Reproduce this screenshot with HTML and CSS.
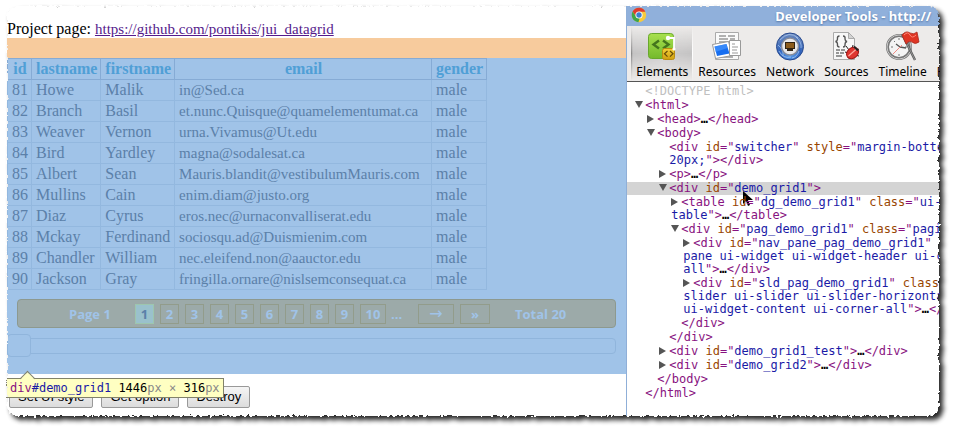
FILE: index.html
```html
<!DOCTYPE html>
<html lang="en">
<head>
<meta charset="utf-8">
<title>jui_datagrid</title>
<link rel="stylesheet" href="styles.css">
</head>
<body>
<div class="sheet">
  <main class="page">
    <p class="project">Project page: <a href="https://github.com/pontikis/jui_datagrid">https://github.com/pontikis/jui_datagrid</a></p>
    <div class="margin-band"></div>
    <section class="grid">
      <table class="data">
        <thead><tr><th>id</th><th>lastname</th><th>firstname</th><th class="email">email</th><th>gender</th></tr></thead>
        <tbody>
          <tr><td>81</td><td>Howe</td><td>Malik</td><td>in@Sed.ca</td><td>male</td></tr>
          <tr><td>82</td><td>Branch</td><td>Basil</td><td>et.nunc.Quisque@quamelementumat.ca</td><td>male</td></tr>
          <tr><td>83</td><td>Weaver</td><td>Vernon</td><td>urna.Vivamus@Ut.edu</td><td>male</td></tr>
          <tr><td>84</td><td>Bird</td><td>Yardley</td><td>magna@sodalesat.ca</td><td>male</td></tr>
          <tr><td>85</td><td>Albert</td><td>Sean</td><td>Mauris.blandit@vestibulumMauris.com</td><td>male</td></tr>
          <tr><td>86</td><td>Mullins</td><td>Cain</td><td>enim.diam@justo.org</td><td>male</td></tr>
          <tr><td>87</td><td>Diaz</td><td>Cyrus</td><td>eros.nec@urnaconvalliserat.edu</td><td>male</td></tr>
          <tr><td>88</td><td>Mckay</td><td>Ferdinand</td><td>sociosqu.ad@Duismienim.com</td><td>male</td></tr>
          <tr><td>89</td><td>Chandler</td><td>William</td><td>nec.eleifend.non@aauctor.edu</td><td>male</td></tr>
          <tr><td>90</td><td>Jackson</td><td>Gray</td><td>fringilla.ornare@nislsemconsequat.ca</td><td>male</td></tr>
        </tbody>
      </table>
      <nav class="pager" aria-label="Pages">
        <span class="current-page">Page 1</span>
        <div class="pages">
          <button class="num active">1</button><button class="num">2</button><button class="num">3</button><button class="num">4</button><button class="num">5</button><button class="num">6</button><button class="num">7</button><button class="num">8</button><button class="num">9</button><button class="num wide">10</button>
        </div>
        <span class="more">...</span>
        <div class="jumps"><button class="next">→</button><button class="last">»</button></div>
        <span class="total">Total 20</span>
      </nav>
      <input class="slider" type="range" min="1" max="20" value="1" aria-label="Page">
      <div class="tip"><span class="tip-tag">div</span><span class="tip-id">#demo_grid1</span> 1446<span class="unit">px</span> <span class="unit">×</span> 316<span class="unit">px</span></div>
    </section>
    <div class="actions">
      <button>Set UI style</button>
      <button>Get option</button>
      <button>Destroy</button>
    </div>
  </main>

  <aside class="devtools">
    <header class="titlebar">
      <svg class="chrome" viewBox="0 0 16 16" aria-hidden="true">
        <circle cx="8" cy="8" r="7.2" fill="#f8ca3a"/>
        <path d="M1.6 4.6A7.2 7.2 0 0 1 14.4 4.8H8L5 9.5Z" fill="#dc3b2f"/>
        <path d="M1.6 4.6 5 9.6l3.6 1.8L7.4 15.2A7.2 7.2 0 0 1 1.6 4.6Z" fill="#3fa648"/>
        <circle cx="8" cy="8" r="3.6" fill="#fff"/><circle cx="8" cy="8" r="2.7" fill="#3c7fd0"/>
      </svg>
      <h1>Developer Tools - http://</h1>
    </header>
    <div class="toolbar">
      <button class="tool selected">
        <svg viewBox="0 0 32 32" aria-hidden="true">
          <defs><linearGradient id="green" x2="0" y2="1"><stop stop-color="#a8e04e"/><stop offset="1" stop-color="#74b92c"/></linearGradient>
          <linearGradient id="gold" x2="0" y2="1"><stop stop-color="#f4cf38"/><stop offset="1" stop-color="#cf9f10"/></linearGradient></defs>
          <rect x="2.5" y="2.5" width="25" height="25" rx="3" fill="url(#green)" stroke="#69a82c"/>
          <path d="M13 9.5 7.5 13.5 13 17.5M17 9.5 22.5 13.5 17 17.5" fill="none" stroke="#44751d" stroke-width="2.4"/>
          <path d="M22 7h6v11" fill="none" stroke="#fff" stroke-width="1.8"/>
          <circle cx="22" cy="7" r="2.2" fill="#fff"/>
          <rect x="16.500" y="17.500" width="12" height="11" rx="2" fill="url(#gold)" stroke="#b98d12"/>
          <path d="m21.500 20-3 2.800 3 2.800M24 20l3 2.800-3 2.800" fill="none" stroke="#654c08" stroke-width="1.200"/>
          <circle cx="28" cy="18" r="1.600" fill="#fff"/>
        </svg>Elements
      </button>
      <button class="tool">
        <svg viewBox="0 0 32 32" aria-hidden="true">
          <path d="M4.500 1.500h23v27h-23z" fill="#fafafa" stroke="#aaa"/>
          <path d="M8 5h7M17 5h7M8 8h9M19 8h5M8 11h14M8 14h12M8 26h14" stroke="#999" stroke-width="1.300"/>
          <path d="m1.500 13.500 16-3 4 14-17 3z" fill="#fff" stroke="#999"/>
          <path d="m3.500 15.500 12-2.500 3 9.500-12.500 2.500z" fill="#176ef0"/>
          <path d="m3.500 15.500 12-2.500 1 4-12 4z" fill="#4b9aff" opacity=".6"/>
          <path d="M18.500 9.500h11v15h-11z" fill="#fff" stroke="#999"/>
          <path d="M21 13h3M21 16h6M21 19h5M21 22h6" stroke="#999" stroke-width="1.200"/>
        </svg>Resources
      </button>
      <button class="tool">
        <svg viewBox="0 0 32 32" aria-hidden="true">
          <defs><radialGradient id="globe" cx=".5" cy=".8" r=".8"><stop stop-color="#5aa0ed"/><stop offset=".5" stop-color="#2f62bc"/><stop offset="1" stop-color="#7690bd"/></radialGradient></defs>
          <circle cx="16" cy="15.500" r="13.500" fill="url(#globe)" stroke="#25488f"/>
          <path d="M6 9Q15-1 24 7M5 20Q9 28 17 26M25 20Q23 26 18 27M4 14Q10 19 9 25M22 6Q28 11 27 17" fill="none" stroke="#b5d3f7" opacity=".65"/>
          <circle cx="16" cy="15.500" r="8.500" fill="#e9e9eb" stroke="#868c9c" stroke-width="1.500"/>
          <path d="M11 11h10v7h-2v2h-6v-2h-2z" fill="#302313"/>
          <path d="M13 12v5M15 12v5M17 12v5M19 12v5" stroke="#e69529"/>
        </svg>Network
      </button>
      <button class="tool">
        <svg viewBox="0 0 32 32" aria-hidden="true">
          <path d="M3.500 1.500h15l6 6v21h-21z" fill="#f7f7f7" stroke="#aaa"/><path d="M18.500 1.500v6h6z" fill="#d3d3d3" stroke="#aaa"/>
          <path d="M9.500 5Q7 5 7.500 8 7.500 10 5.500 10.500 7.500 11 7.500 13 7 16 9.500 16M13 5Q15.500 5 15 8 15 10 17 10.500 15 11 15 13 15.500 16 13 16" fill="none" stroke="#555" stroke-width="1.400"/>
          <path d="M6 19h4M11 19h4M6 22h3M10 22h4M6 25h6" stroke="#777" stroke-width="1.300"/>
          <path d="m16 15 3 4M23 14l-1 4M29 18l-4 2M29 25l-4-1M15 21l3 1M19 28l1-3" stroke="#222"/>
          <ellipse cx="22.500" cy="22" rx="6.500" ry="5.200" transform="rotate(-40 22.500 22)" fill="#df3630" stroke="#a21614"/>
          <path d="m18.500 25 8-7" stroke="#ffaaa0" stroke-width="1.200"/><path d="m24 15.500 4 4" stroke="#222" stroke-width="2"/>
        </svg>Sources
      </button>
      <button class="tool">
        <svg viewBox="0 0 32 32" aria-hidden="true">
          <circle cx="12" cy="16" r="11.500" fill="#f4f4f4" stroke="#777" stroke-width="3"/>
          <circle cx="12" cy="16" r="12" fill="none" stroke="#c9c9c9"/>
          <path d="M12 7v2M4 16h2M20 16h-2M12 25v-2M7 10l1 1M7 22l1-1" stroke="#777"/>
          <path d="m13 16-4-3M13 16l6 1" stroke="#555" stroke-width="1.300"/><path d="m6 23 9-9" stroke="#ee8b84"/>
          <path d="m15 3 13 26" stroke="#555" stroke-width="2.400"/><path d="m15 3 13 26" stroke="#aaa" stroke-width=".8"/>
          <path d="M15 4Q19-1 23 2 27 4 30 1L32 11Q28 14 25 11 22 9 19 13Z" fill="#df3524" stroke="#a82b20" stroke-width=".8"/>
          <path d="M17 4Q21 0 23 4T29 4" fill="none" stroke="#ff8675"/>
        </svg>Timeline
      </button>
      <button class="tool">
        <svg viewBox="0 0 32 32" aria-hidden="true"></svg>Profiles
      </button>
    </div>
    <div class="tree">
      <div class="row leaf d0 doctype">&lt;!DOCTYPE html&gt;</div>
      <div class="row d0"><i class="open"></i>&lt;html&gt;</div>
      <div class="row d1"><i class="shut"></i>&lt;head&gt;<b>…</b>&lt;/head&gt;</div>
      <div class="row d1"><i class="open"></i>&lt;body&gt;</div>
      <div class="row leaf d2">&lt;div <em>id</em>="<q>switcher</q>" <em>style</em>="<q>margin-bottom:<br>20px;</q>"&gt;&lt;/div&gt;</div>
      <div class="row d2"><i class="shut"></i>&lt;p&gt;<b>…</b>&lt;/p&gt;</div>
      <div class="row d2 picked"><i class="open"></i>&lt;div <em>id</em>="<q>demo_grid1</q>"&gt;<svg class="cursor" viewBox="0 0 12 18" aria-hidden="true"><path d="M1 1v13l3-3 2 5 2-1-2-5h5z"/></svg></div>
      <div class="row d3"><i class="shut"></i>&lt;table <em>id</em>="<q>dg_demo_grid1</q>" <em>class</em>="<q>ui-s<br>table</q>"&gt;<b>…</b>&lt;/table&gt;</div>
      <div class="row d3"><i class="open"></i>&lt;div <em>id</em>="<q>pag_demo_grid1</q>" <em>class</em>="<q>pagin</q></div>
      <div class="row d4"><i class="shut"></i>&lt;div <em>id</em>="<q>nav_pane_pag_demo_grid1</q>" <em>c</em><q><br>pane ui-widget ui-widget-header ui-co<br>all</q>"&gt;<b>…</b>&lt;/div&gt;</div>
      <div class="row d4"><i class="shut"></i>&lt;div <em>id</em>="<q>sld_pag_demo_grid1</q>" <em>class</em>=<q><br>slider ui-slider ui-slider-horizontal<br>ui-widget-content ui-corner-all</q>"&gt;<b>…</b>&lt;/d</div>
      <div class="row leaf d3">&lt;/div&gt;</div>
      <div class="row leaf d2">&lt;/div&gt;</div>
      <div class="row d2"><i class="shut"></i>&lt;div <em>id</em>="<q>demo_grid1_test</q>"&gt;<b>…</b>&lt;/div&gt;</div>
      <div class="row d2"><i class="shut"></i>&lt;div <em>id</em>="<q>demo_grid2</q>"&gt;<b>…</b>&lt;/div&gt;</div>
      <div class="row leaf d1">&lt;/body&gt;</div>
      <div class="row leaf d0">&lt;/html&gt;</div>
    </div>
  </aside>
</div>
<svg class="torn" aria-hidden="true">
  <filter id="tear" filterUnits="userSpaceOnUse" x="0" y="0" width="100%" height="100%" color-interpolation-filters="sRGB">
    <feTurbulence type="fractalNoise" baseFrequency=".3" numOctaves="2" seed="4" result="noise"/>
    <feDisplacementMap in="SourceGraphic" in2="noise" scale="5" xChannelSelector="R" yChannelSelector="G"/>
    <feGaussianBlur stdDeviation=".5" result="paper"/>
    <feFlood flood-color="#fff" result="white"/>
    <feOffset in="paper" dx="4" dy="4"/>
    <feGaussianBlur stdDeviation="2.500"/>
    <feComponentTransfer result="shadow"><feFuncA type="linear" slope=".85"/></feComponentTransfer>
    <feComposite in="shadow" in2="white" operator="over" result="ground"/>
    <feComposite in="ground" in2="paper" operator="out"/>
  </filter>
  <g filter="url(#tear)"><rect class="outline" x="7" y="6" rx="9"/></g>
</svg>
</body>
</html>
```
FILE: styles.css
```css
* { box-sizing: border-box; }

body {
  position: relative;
  margin: 0;
  padding: 6px 15px 17px 7px;
  background: #fff;
  color: #000;
  font: 16px/18px "Liberation Serif", serif;
}

button { margin: 0; font: inherit; color: inherit; }

.sheet { display: flex; }
.page { flex: 620 1 0; min-width: 0; padding-top: 13px; }

.project { margin: 0; line-height: 19px; }
.project a { color: #551a8b; font-size: 15px; line-height: 16px; }
.margin-band { height: 20px; background: #f7cb9d; }

/* Highlighted grid */
.grid { position: relative; height: 316px; background: #a0c3e8; }
.data { border-collapse: collapse; color: #5b80a9; }
.data th, .data td { padding: 1px 3px 1px 4px; border: 1px solid #93b8df; text-align: left; }
.data th { border-color: #86abd5; color: #509fd6; text-align: center; }
.data .email { width: 257px; }
.data td:nth-child(4) { font-size: 15px; }

.pager {
  display: flex;
  align-items: center;
  height: 29px;
  margin: 9px 10px;
  padding-left: 51px;
  border: 1px solid #8d998f;
  border-radius: 4px;
  background: #9caaa9;
  color: #a0c3e8;
  font: 700 13px/18px "Open Sans", sans-serif;
  white-space: nowrap;
}
.current-page { width: 66px; }
.pages, .jumps { display: flex; gap: 6px; }
.pager button { height: 20px; padding: 0; border: 1px solid #929c8b; background: none; }
.num { width: 19px; }
.pager .active { border-color: #9dc6ae; background: #9ac1cc; color: #5b80a9; }
.pager .wide { width: 26px; }
.more { width: 32px; padding-left: 5px; }
.pager .next { width: 36px; font: 16px/16px "DejaVu Sans", sans-serif; }
.last { width: 30px; }
.total { margin-left: 25px; }

.slider {
  display: block;
  width: calc(100% - 10px);
  height: 24px;
  margin: -3px 0 0;
  appearance: none;
  background: none;
}
.slider::-webkit-slider-runnable-track { height: 16px; border: 1px solid #90b5dc; border-radius: 4px; }
.slider::-webkit-slider-thumb {
  appearance: none;
  width: 24px;
  height: 23px;
  margin: -5px 0 0 -1px;
  border: 1px solid #90b5dc;
  border-radius: 4px;
  background: #a0c3e8;
}

.tip {
  position: absolute;
  top: calc(100% + 4px);
  left: -1px;
  padding: 0 3px;
  border: 1px solid #82826a;
  background: #ffffc2;
  font: 12px/18px "DejaVu Sans Mono", monospace;
  white-space: nowrap;
}
.tip::before {
  content: "";
  position: absolute;
  top: -6px;
  left: 15px;
  width: 10px;
  height: 10px;
  border: solid #82826a;
  border-width: 1px 0 0 1px;
  background: linear-gradient(135deg, #ffffc2 50%, transparent 50%);
  transform: rotate(45deg);
}
.tip-tag { color: #881280; }
.tip-id { color: #1a1aa6; }
.unit { color: #888; }

.actions { display: flex; gap: 8px; padding: 12px 2px 7px; }
.actions button {
  height: 22px;
  padding: 0 8px;
  border: 1px solid #999;
  border-radius: 2px;
  background: linear-gradient(#f5f5f5, #dcdcdc);
  font: 13px/20px "Liberation Sans", sans-serif;
}

/* Developer tools */
.devtools { flex: 313 1 0; min-width: 0; overflow: hidden; border-left: 1px solid #8fafd8; background: #fff; }
.titlebar { display: flex; height: 20px; background: #90b0db; }
.chrome { width: 16px; height: 16px; margin: 1px 0 0 4px; }
.titlebar h1 {
  margin: 0 0 0 128px;
  color: #fff;
  font: 700 13px/20px "Noto Sans", sans-serif;
  text-shadow: 0 1px 2px #5878a8;
  white-space: nowrap;
}
.toolbar {
  display: flex;
  height: 56px;
  padding-left: 4px;
  overflow: hidden;
  border-bottom: 1px solid #555;
  background: #edebea;
}
.tool {
  display: flex;
  flex: none;
  flex-direction: column;
  align-items: center;
  padding: 5px 5px 0;
  border: 0;
  background: none;
  font: 12px/18px "Noto Sans", sans-serif;
}
.tool svg { width: 32px; height: 32px; overflow: visible; }
.tool.selected {
  background:
    linear-gradient(#edebea, transparent 50%, #edebea),
    linear-gradient(90deg, #777, #c4c3c3 3%, #cfcece 50%, #c4c3c3 98%, #fff 99%);
}

.tree {
  padding: 2px 0 16px;
  overflow: hidden;
  color: #881280;
  font: 12px/13px "DejaVu Sans Mono", monospace;
}
.row { position: relative; margin-top: 1px; padding-left: var(--indent); white-space: pre; }
.d0 { --indent: 8px; }
.d1 { --indent: 20px; }
.d2 { --indent: 32px; }
.d3 { --indent: 44px; }
.d4 { --indent: 56px; }
.leaf { padding-left: calc(var(--indent) + 10px); }
.row em { color: #994500; font-style: normal; }
.row q { color: #1a1aa6; quotes: none; }
.row b { color: #000; }
.doctype { color: #c0c0c0; }
.picked { background: #d4d4d4; }
.row i { display: inline-block; width: 10px; height: 8px; }
.row i::before { content: ""; display: block; width: 0; border: solid transparent; }
.row .open::before { border-width: 7px 4px 0; border-top-color: #555; }
.row .shut::before { border-width: 4px 0 4px 7px; border-left-color: #555; }
.cursor { position: absolute; top: 8px; left: 115px; width: 12px; height: 18px; }

/* Torn paper edge */
.torn { position: absolute; inset: 0; width: 100%; height: 100%; pointer-events: none; }
.outline { width: calc(100% - 23px); height: calc(100% - 23px); }
```
